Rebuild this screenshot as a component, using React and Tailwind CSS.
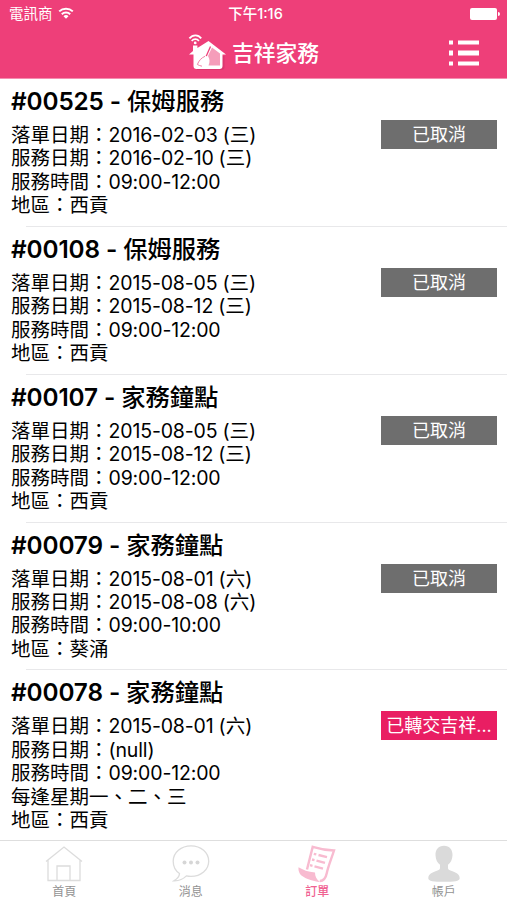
const orders = [
  {
    id: "#00525",
    service: "保姆服務",
    lines: [
      ["落單日期：", "2016-02-03", "(三)"],
      ["服務日期：", "2016-02-10", "(三)"],
      ["服務時間：", "09:00-12:00"],
      ["地區：西貢"],
    ],
    status: "已取消",
  },
  {
    id: "#00108",
    service: "保姆服務",
    lines: [
      ["落單日期：", "2015-08-05", "(三)"],
      ["服務日期：", "2015-08-12", "(三)"],
      ["服務時間：", "09:00-12:00"],
      ["地區：西貢"],
    ],
    status: "已取消",
  },
  {
    id: "#00107",
    service: "家務鐘點",
    lines: [
      ["落單日期：", "2015-08-05", "(三)"],
      ["服務日期：", "2015-08-12", "(三)"],
      ["服務時間：", "09:00-12:00"],
      ["地區：西貢"],
    ],
    status: "已取消",
  },
  {
    id: "#00079",
    service: "家務鐘點",
    lines: [
      ["落單日期：", "2015-08-01", "(六)"],
      ["服務日期：", "2015-08-08", "(六)"],
      ["服務時間：", "09:00-10:00"],
      ["地區：葵涌"],
    ],
    status: "已取消",
  },
  {
    id: "#00078",
    service: "家務鐘點",
    lines: [
      ["落單日期：", "2015-08-01", "(六)"],
      ["服務日期：", "(null)"],
      ["服務時間：", "09:00-12:00"],
      ["每逢星期一、二、三"],
      ["地區：西貢"],
    ],
    status: "已轉交吉祥...",
    active: true,
  },
];

function WifiIcon() {
  return (
    <svg className="h-[13px] w-4" viewBox="0 0 16 13" fill="none" aria-hidden="true">
      <path d="M1.2 4.4a9.8 9.8 0 0 1 13.6 0" stroke="#fff" strokeWidth="2" />
      <path d="M3.8 7.3a6 6 0 0 1 8.4 0" stroke="#fff" strokeWidth="2" />
      <path d="M5.5 9.2a3.4 3.4 0 0 1 5 0L8 11.8Z" fill="#fff" />
    </svg>
  );
}

function Logo() {
  return (
    <svg className="h-[38px] w-[40px]" viewBox="0 0 40 38" fill="none" aria-hidden="true">
      <path d="M8 22h28.500v11a3 3 0 0 1-3 3H9z" fill="#c62f63" opacity=".45" />
      <path
        d="M1 20.5 5 17v-5.500h4.400v2.500L20.500 7 38 20.500h-3.500V32a3 3 0 0 1-3 3H8.500a3 3 0 0 1-3-3V20.500Z"
        fill="#fff"
      />
      <path d="m24 13.500 8 6v12H20.500c1.500-3.500 1.300-6.500-.5-9.500Z" fill="#f59dba" />
      <path d="m22.500 12.500-4.300 9.800" stroke="#ee3f79" strokeWidth="1.300" />
      <path
        d="M18 22c-4 1.200-7 4.500-8.500 8.500 2.500 1.300 5 2 8.500 2 3.500-3.500 3.500-8 0-10.500Z"
        fill="#fff"
      />
      <path d="M17 22.300c-3.600 1.500-6.300 4.500-7.600 8.200 1.600.9 3 1.400 4.600 1.700" stroke="#f27fa5" strokeWidth="1" />
      <path d="M1.400 4.400C4.800.3 10.200.3 13.200 4.400" stroke="#fff" strokeWidth="1.800" />
      <path d="M3.700 7c2-2.400 5.400-2.400 7.200 0" stroke="#fff" strokeWidth="1.700" />
      <circle cx="7.200" cy="8.900" r="1.400" fill="#fff" />
    </svg>
  );
}

function MenuIcon() {
  return (
    <svg className="h-[26px] w-[30px]" viewBox="0 0 30 26" fill="#fff" aria-hidden="true">
      <path d="M0 .5h4v4H0zM9 .5h21v4H9zM0 10.5h4v5H0zM9 10.5h21v5H9zM0 21.5h4v4H0zM9 21.5h21v4H9z" />
    </svg>
  );
}

function Header() {
  return (
    <header className="flex h-[79px] shrink-0 flex-col border-b border-[#f58db0] bg-[#ee3f79] text-white">
      <div className="grid h-[27px] grid-cols-3 items-center pl-[9px] pr-[7px] text-[14.5px] leading-[27px]">
        <div className="flex items-center gap-[5px]">
          <span>電訊商</span>
          <WifiIcon />
        </div>
        <span className="pl-[2px] text-center font-medium">下午1:16</span>
        <div className="flex items-center justify-end gap-px">
          <span className="h-[12px] w-[27px] rounded-[2px] bg-white" />
          <span className="h-[4px] w-[2px] rounded-r-full bg-white" />
        </div>
      </div>
      <div className="grid flex-1 grid-cols-[1fr_auto_1fr] items-center">
        <span />
        <div className="flex items-center gap-[4px]">
          <Logo />
          <h1 className="text-[21.8px] font-medium leading-[38px]">吉祥家務</h1>
        </div>
        <button type="button" className="mr-[28px] justify-self-end" aria-label="選單">
          <MenuIcon />
        </button>
      </div>
    </header>
  );
}

function OrderRow({ order, last }) {
  return (
    <li>
      <div className="flex justify-between pb-[8.3px] pl-[11px] pr-[10px] pt-[7px]">
        <div className="whitespace-nowrap">
          <h2 className="mb-[8px] h-[30px] text-[24.3px] font-medium leading-[30px]">
            <span className="font-semibold tracking-[-0.1px]">{order.id} - </span>
            {order.service}
          </h2>
          {order.lines.map(([label, value, day]) => (
            <p key={label} className="flex h-[23.4px] text-[19.5px] leading-[23.4px]">
              <span>{label}</span>
              {value && <span className="tracking-[-0.15px]">{value}</span>}
              {day && <span className="ml-[5px]">{day}</span>}
            </p>
          ))}
        </div>
        <span
          className={`mt-[34px] h-[29px] w-[116px] text-center text-[18px] leading-[29px] text-white ${
            order.active ? "bg-[#e91e63]" : "bg-[#6e6e6e]"
          }`}
        >
          {order.status}
        </span>
      </div>
      {!last && <div className="ml-[26px] h-px bg-[#e8e8ea]" />}
    </li>
  );
}

function HomeIcon() {
  return (
    <svg className="h-[38px] w-[38px]" viewBox="0 0 38 38" fill="none" stroke="#dcdcdc" strokeWidth="1.3" aria-hidden="true">
      <path d="M1 16.5 19 2l18 14.500M3 15v20.500h32V15M12 35.500V21h13v14.500" />
    </svg>
  );
}

function MessageIcon() {
  return (
    <svg className="h-[38px] w-[38px]" viewBox="0 0 38 38" fill="none" aria-hidden="true">
      <path
        d="M19 .9C9 .9 1.2 7.700 1.200 16.200c0 5.300 2.200 9.500 6.300 12.300-.1 3.300-2.200 5.300-5.600 7.300 5.300.2 9.500-1.800 12.500-4.900 1.500.4 3 .5 4.600.5 10 0 17.700-6.600 17.700-15.200C36.700 7.600 29 .9 19 .9Z"
        stroke="#dcdcdc"
        strokeWidth="1.3"
      />
      <circle cx="12.500" cy="17.500" r="2" fill="#d6d6d6" />
      <circle cx="19" cy="17.500" r="2" fill="#d6d6d6" />
      <circle cx="25.500" cy="17.500" r="2" fill="#d6d6d6" />
    </svg>
  );
}

function OrdersIcon() {
  return (
    <svg className="h-[38px] w-[38px]" viewBox="0 0 38 38" fill="none" aria-hidden="true">
      <path
        d="M9 24.500 14.700 1.900c7 2.200 13.300 3.300 21.300 3.600-2.500 8-5.500 15-7.200 22.500-1 5-3.300 8-7 8"
        stroke="#f8bbd0"
        strokeWidth="2.400"
      />
      <path
        d="M.500 22.300c4.500 2.600 9.500 4.700 16.500 5.200 0 4 1.500 7 5 9.500C15 36.500 5 33 2 29 .700 27 .300 24.500.500 22.300Z"
        fill="#f8bbd0"
      />
      <path d="m20.500 10 8.500 2.200M18.500 15.700l8.500 2.200M16.500 21.400l8.500 2.200" stroke="#f8bbd0" strokeWidth="2.400" />
      <path d="m15.800 8.800 2.500.6M14 14.500l2.500.6M12 20.200l2.500.6" stroke="#f8bbd0" strokeWidth="2.400" />
    </svg>
  );
}

function AccountIcon() {
  return (
    <svg className="h-[38px] w-[38px]" viewBox="0 0 38 38" fill="#dadada" aria-hidden="true">
      <path d="M19 .7c-5.600 0-8.700 4-8.500 9.500.2 4.300 1.800 7.500 4.500 9.600v3.200c0 1.300-.7 2-2.500 2.600C7 27.400 3.300 29.200 3.300 33.200c0 3 5.500 3.600 15.700 3.600s15.700-.6 15.700-3.600c0-4-3.700-5.800-9.200-7.600-1.800-.6-2.500-1.300-2.500-2.600v-3.200c2.700-2.100 4.300-5.300 4.500-9.600C27.700 4.700 24.600.7 19 .7Z" />
    </svg>
  );
}

const tabs = [
  { label: "首頁", icon: HomeIcon },
  { label: "消息", icon: MessageIcon },
  { label: "訂單", icon: OrdersIcon, active: true },
  { label: "帳戶", icon: AccountIcon },
];

function TabBar() {
  return (
    <nav className="grid h-[60px] shrink-0 grid-cols-4 border-t border-[#dedede] bg-white pl-[1px]">
      {tabs.map(({ label, icon: Icon, active }) => (
        <div key={label} className="flex flex-col items-center pt-[4px]">
          <Icon />
          <span
            className={`mt-px text-[12px] leading-[16px] ${
              active ? "font-medium text-[#f06292]" : "text-[#929292]"
            }`}
          >
            {label}
          </span>
        </div>
      ))}
    </nav>
  );
}

export default function App() {
  return (
    <div className="flex h-[900px] w-[507px] flex-col overflow-hidden bg-white font-['Inter','Noto_Sans_CJK_TC',sans-serif] text-black">
      <Header />
      <ul className="min-h-0 flex-1 overflow-hidden">
        {orders.map((order, index) => (
          <OrderRow key={order.id} order={order} last={index === orders.length - 1} />
        ))}
      </ul>
      <TabBar />
    </div>
  );
}
